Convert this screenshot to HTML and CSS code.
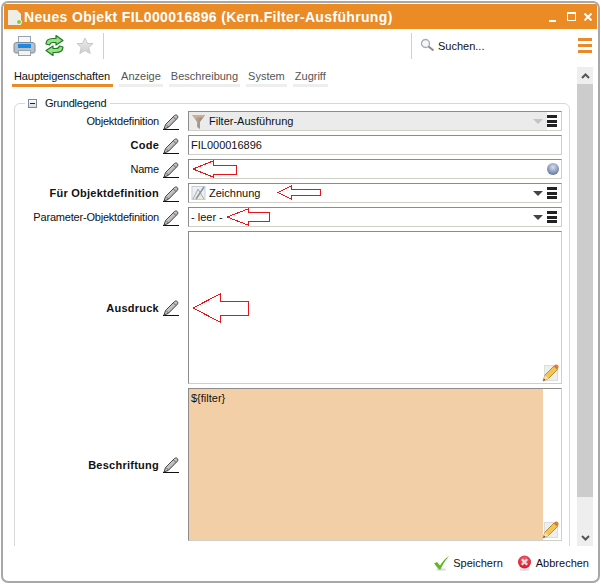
FILE: index.html
```html
<!DOCTYPE html>
<html lang="de">
<head>
    <meta charset="UTF-8">
    <title>Neues Objekt FIL000016896</title>
    <link rel="stylesheet" href="styles.css">
</head>
<body>
    <svg class="defs" width="0" height="0">
        <defs>
            <linearGradient id="pencilBody" x1="0" y1="0" x2="1" y2="1">
                <stop offset="0" stop-color="#f4f4f4"/>
                <stop offset="1" stop-color="#8a8a8a"/>
            </linearGradient>
            <linearGradient id="starFill" x1="0" y1="0" x2="0" y2="1">
                <stop offset="0" stop-color="#ececec"/>
                <stop offset="1" stop-color="#cfcfcf"/>
            </linearGradient>
            <linearGradient id="funnelFill" x1="0" y1="0" x2="1" y2="0">
                <stop offset="0" stop-color="#c9bdb0"/>
                <stop offset="1" stop-color="#85796d"/>
            </linearGradient>
            <radialGradient id="errFill" cx=".5" cy=".3" r=".7">
                <stop offset="0" stop-color="#f4606c"/>
                <stop offset="1" stop-color="#d8142a"/>
            </radialGradient>
            <symbol id="pencil" viewBox="0 0 16 16">
                <path d="M0 15.500H16" stroke="#111" stroke-width="1" fill="none"/>
                <path d="M1 15L2.500 10.500L11.500 1.500C12.500 .7 13.500 .8 14.300 1.600C15 2.400 15 3.400 14.300 4.300L5.300 13.400Z" fill="url(#pencilBody)" stroke="#333" stroke-width=".9"/>
                <path d="M3 10.500L5.500 13M10.500 3L13 5.500" stroke="#444" stroke-width=".7" fill="none"/>
            </symbol>
            <symbol id="editnote" viewBox="0 0 17 18">
                <rect x="2.500" y="1.500" width="13" height="15" fill="#eee" stroke="#ddd"/>
                <path d="M1 17L3 11L12 2L15.500 5.500L6.500 14.500Z" fill="#f3c552" stroke="#a97c20" stroke-width=".8"/>
                <path d="M11.500 2.500L13 1C14 .2 15.300 .6 16 1.400C16.800 2.300 16.800 3.400 16 4.500L15 5.500Z" fill="#e8792a"/>
                <path d="M1 17L3 11L6.500 14.500Z" fill="#f5dfb8"/>
                <path d="M1 17L2 14.500L3.500 16Z" fill="#7a4a20"/>
            </symbol>
        </defs>
    </svg>

    <div class="window">
        <header class="titlebar">
            <svg class="title-doc" width="14" height="15" viewBox="0 0 14 15">
                <path d="M0 0H9L13 4V15H0Z" fill="#eeeee6"/>
                <circle cx="11" cy="12" r="2.500" fill="#8cc63f" stroke="#f6f6f0"/>
            </svg>
            <h1>Neues Objekt FIL000016896 (Kern.Filter-Ausführung)</h1>
            <div class="win-buttons">
                <span class="win-min"></span>
                <span class="win-max"></span>
                <svg width="8" height="8" viewBox="0 0 8 8"><path d="M.5 .5L7.500 7.500M7.500 .5L.5 7.500" stroke="#fff" stroke-width="2"/></svg>
            </div>
        </header>

        <div class="toolbar">
            <div class="tool-icons">
                <svg width="23" height="22" viewBox="0 0 23 22">
                    <rect x="5.500" y="1.500" width="12" height="9" fill="#f4f6f8" stroke="#9aa4ae"/>
                    <path d="M1 10C1 8 2 7.500 4 7.500H19C21 7.500 22 8 22 10V16C22 17.500 21 18 19 18H4C2 18 1 17.500 1 16Z" fill="#b9c2cb" stroke="#7f8a95"/>
                    <rect x="5" y="9" width="13" height="4" fill="#1e88e5"/>
                    <rect x="5.500" y="15.500" width="12" height="5" fill="#f2f3f5" stroke="#9aa4ae"/>
                </svg>
                <svg width="21" height="23" viewBox="0 0 21 23">
                    <path d="M2 10C2 6 5 4.500 9 4.500H12V1.500L19 6.500L12 11V8.500H9C7 8.500 6 9.500 5.500 11Z" fill="#9be07f" stroke="#1c7a2c" stroke-width="1.200" stroke-linejoin="round"/>
                    <path d="M19 13C19 17 16 18.500 12 18.500H9V21.500L2 16.500L9 12V14.500H12C14 14.500 15 13.500 15.500 12Z" fill="#9be07f" stroke="#1c7a2c" stroke-width="1.200" stroke-linejoin="round"/>
                </svg>
                <svg class="tool-star" width="18" height="18" viewBox="0 0 18 18">
                    <path d="M9 1L11.500 6.500H17L12.800 10.500L14.200 16.500L9 13.500L3.800 16.500L5.200 10.500L1 6.500H6.500Z" fill="url(#starFill)" stroke="#c8c8c8"/>
                </svg>
            </div>
            <div class="search">
                <svg width="15" height="15" viewBox="0 0 15 15">
                    <circle cx="5.500" cy="5.500" r="4" fill="#f5f7f9" stroke="#a9adb2" stroke-width="1.300"/>
                    <path d="M8.500 8.500L13.500 12.500" stroke="#8d8d8d" stroke-width="2"/>
                </svg>
                <span>Suchen...</span>
            </div>
            <div class="page-menu"><i></i><i></i><i></i></div>
        </div>

        <nav class="tabs">
            <a class="tab active">Haupteigenschaften</a>
            <a class="tab">Anzeige</a>
            <a class="tab">Beschreibung</a>
            <a class="tab">System</a>
            <a class="tab">Zugriff</a>
        </nav>

        <div class="content">
            <div class="scroll-area">
                <fieldset class="group">
                    <legend>
                        <span class="collapse"></span>
                        <span>Grundlegend</span>
                    </legend>

                    <div class="row">
                        <label>Objektdefinition</label>
                        <svg class="pen"><use href="#pencil"/></svg>
                        <div class="field disabled">
                            <svg class="field-icon" width="15" height="15" viewBox="0 0 15 15">
                                <path d="M1 1H14L9 8V15L6 13V8Z" fill="url(#funnelFill)"/>
                                <path d="M1 1H14L12 3.500H3Z" fill="#d9a98c"/>
                            </svg>
                            <span class="value">Filter-Ausführung</span>
                            <i class="caret light"></i>
                            <span class="burger-box"><span class="burger"><i></i><i></i><i></i></span></span>
                        </div>
                    </div>

                    <div class="row">
                        <label class="strong">Code</label>
                        <svg class="pen"><use href="#pencil"/></svg>
                        <div class="field"><span class="value">FIL000016896</span></div>
                    </div>

                    <div class="row">
                        <label>Name</label>
                        <svg class="pen"><use href="#pencil"/></svg>
                        <div class="field">
                            <svg class="arrow arrow-name" width="45" height="18" viewBox="0 0 45 18"><path d="M1 9L21 1V5H44V14H21V17Z"/></svg>
                            <span class="value"></span>
                            <span class="orb"></span>
                        </div>
                    </div>

                    <div class="row">
                        <label class="strong">Für Objektdefinition</label>
                        <svg class="pen"><use href="#pencil"/></svg>
                        <div class="field">
                            <svg class="field-icon" width="15" height="16" viewBox="0 0 15 16">
                                <rect x="1" y="1.500" width="13" height="13" fill="#eef0f3" stroke="#c9cdd3"/>
                                <path d="M2 14L7 4L13 14" fill="#f3ead2" stroke="#a3a7ae"/>
                                <path d="M5 14L13 2" stroke="#7d97b8" stroke-width="1.500"/>
                            </svg>
                            <span class="value">Zeichnung</span>
                            <svg class="arrow arrow-draw" width="45" height="15" viewBox="0 0 45 15"><path d="M1 7.500L14 1V4H43V10.500H14V14Z"/></svg>
                            <i class="caret"></i>
                            <span class="burger"><i></i><i></i><i></i></span>
                        </div>
                    </div>

                    <div class="row">
                        <label>Parameter-Objektdefinition</label>
                        <svg class="pen"><use href="#pencil"/></svg>
                        <div class="field">
                            <span class="value">- leer -</span>
                            <svg class="arrow arrow-empty" width="45" height="18" viewBox="0 0 45 18"><path d="M1 9L22 1V4H43V13H22V17Z"/></svg>
                            <i class="caret"></i>
                            <span class="burger"><i></i><i></i><i></i></span>
                        </div>
                    </div>

                    <div class="row row-tall">
                        <label class="strong">Ausdruck</label>
                        <svg class="pen"><use href="#pencil"/></svg>
                        <div class="field field-area">
                            <svg class="arrow arrow-expr" width="57" height="30" viewBox="0 0 57 30"><path d="M1 15L28 1V8H56V22H28V29Z"/></svg>
                            <svg class="edit-note"><use href="#editnote"/></svg>
                        </div>
                    </div>

                    <div class="row row-tall">
                        <label class="strong">Beschriftung</label>
                        <svg class="pen"><use href="#pencil"/></svg>
                        <div class="field field-area field-caption">
                            <div class="caption-text">${filter}</div>
                            <svg class="edit-note"><use href="#editnote"/></svg>
                        </div>
                    </div>
                </fieldset>
            </div>

            <div class="scrollbar">
                <div class="scroll-btn">
                    <svg width="9" height="6" viewBox="0 0 9 6"><path d="M1 5L4.500 1.500L8 5" fill="none" stroke="#555" stroke-width="2"/></svg>
                </div>
                <div class="scroll-thumb"></div>
                <div class="scroll-btn scroll-down">
                    <svg width="9" height="6" viewBox="0 0 9 6"><path d="M1 1L4.500 4.500L8 1" fill="none" stroke="#555" stroke-width="2"/></svg>
                </div>
            </div>
        </div>

        <footer class="actions">
            <a class="action">
                <svg width="15" height="15" viewBox="0 0 15 15">
                    <ellipse cx="7" cy="13.500" rx="5" ry="1.300" fill="#ddd"/>
                    <path d="M0 7.500L3 6L6 9.500C8 6 11 2.500 15 0C11.500 4 8.500 9 6.500 13.500H5Z" fill="#66b32e"/>
                </svg>
                Speichern
            </a>
            <a class="action">
                <svg width="15" height="16" viewBox="0 0 15 16">
                    <ellipse cx="7.500" cy="14.500" rx="5" ry="1.300" fill="#ddd"/>
                    <circle cx="7.500" cy="7" r="6.500" fill="url(#errFill)"/>
                    <path d="M4.800 4.300L10.200 9.700M10.200 4.300L4.800 9.700" stroke="#f8e0e3" stroke-width="2.200"/>
                </svg>
                Abbrechen
            </a>
        </footer>
    </div>
</body>
</html>
```

FILE: styles.css
```css
* {
    box-sizing: border-box;
}

body {
    margin: 0;
    background: #fff;
    font-family: "Liberation Sans", Arial, sans-serif;
    font-size: 11px;
    color: #111;
}

.defs {
    position: absolute;
}

.window {
    width: 599px;
    height: 582px;
    margin: 1px;
    padding: 1px;
    border: 2px solid #a8a8a8;
    border-radius: 7px;
    display: flex;
    flex-direction: column;
    overflow: hidden;
}

/* title */
.titlebar {
    height: 25px;
    flex: none;
    background: #eb8b26;
    display: flex;
    align-items: center;
    padding: 0 5px 0 4px;
    color: #fff;
}

.title-doc {
    margin-right: 2px;
    margin-top: 1px;
}

.titlebar h1 {
    margin: 0;
    font-size: 14px;
    font-weight: bold;
    letter-spacing: .34px;
    white-space: nowrap;
    flex: 1;
}

.win-buttons {
    display: flex;
    align-items: center;
}

.win-min {
    width: 7px;
    height: 2px;
    background: #fff;
    margin-top: 8px;
    margin-right: 11px;
}

.win-max {
    width: 9px;
    height: 9px;
    border: 1px solid #fff;
    border-top-width: 2px;
    margin-right: 8px;
}

/* toolbar */
.toolbar {
    height: 33px;
    flex: none;
    display: flex;
    align-items: center;
    padding: 0 5px 0 9px;
}

.tool-icons {
    display: flex;
    align-items: center;
    gap: 8px;
    width: 91px;
    height: 26px;
    border-right: 1px solid #d0d0d0;
}

.tool-star {
    margin-left: 3px;
}

.search {
    margin-left: 307px;
    flex: 1;
    height: 26px;
    padding-left: 8px;
    border-left: 1px solid #d0d0d0;
    display: flex;
    align-items: center;
    gap: 3px;
}

.page-menu {
    width: 14px;
    display: flex;
    flex-direction: column;
    gap: 3px;
}

.page-menu i {
    height: 3px;
    background: #e98a2a;
}

/* tabs */
.tabs {
    height: 18px;
    flex: none;
    display: flex;
    gap: 6px;
    margin-top: 8px;
    padding-left: 8px;
}

.tab {
    padding: 0 2px;
    line-height: 13px;
    border-bottom: 3px solid #eee;
    height: 17px;
    color: #555;
}

.tab.active {
    color: #111;
    padding-right: 3px;
    letter-spacing: -.1px;
    border-bottom-color: #eb8b26;
}

/* body + scrollbar */
.content {
    height: 479px;
    flex: none;
    margin-top: -21px;
    display: flex;
    padding-right: 4px;
}

.scroll-area {
    flex: 1;
    overflow: hidden;
    padding: 30px 7px 0 10px;
}

.group {
    margin: 0;
    padding: 0 7px 40px 0;
    border: 1px solid #d8d8d8;
    border-radius: 6px;
    min-width: 0;
}

.group legend {
    margin-left: 10px;
    margin-bottom: 1px;
    padding: 0 4px 0 3px;
    display: flex;
    align-items: center;
    gap: 8px;
    line-height: 13px;
    letter-spacing: -.2px;
}

.collapse {
    width: 9px;
    height: 9px;
    border: 1px solid #7e8a9a;
    background: linear-gradient(#fff, #d5dbe3);
    position: relative;
}

.collapse::after {
    content: "";
    position: absolute;
    left: 1px;
    right: 1px;
    top: 3px;
    height: 1px;
    background: #222;
}

.scrollbar {
    width: 16px;
    flex: none;
    display: flex;
    flex-direction: column;
    background: #eee;
}

.scroll-btn {
    height: 17px;
    flex: none;
    display: flex;
    align-items: center;
    justify-content: center;
}

.scroll-thumb {
    height: 413px;
    background: #ccc;
}

.scroll-down {
    margin-top: auto;
}

/* form rows */
.row {
    display: grid;
    grid-template-columns: 148px 16px 1fr;
    align-items: center;
    height: 20px;
    margin-bottom: 4px;
}

.row-tall {
    height: 153px;
}

.row label {
    text-align: right;
    white-space: nowrap;
    letter-spacing: -.2px;
    margin-right: 4px;
}

.row label.strong {
    font-weight: bold;
    letter-spacing: .25px;
}

.pen {
    width: 16px;
    height: 16px;
    margin-top: 1px;
}

.field {
    position: relative;
    height: 100%;
    margin-left: 9px;
    border: 1px solid #d0d0c8;
    border-top: 1px solid #8c8c8c;
    border-left: 1px solid #8c8c8c;
    background: #fff;
    display: flex;
    align-items: center;
    padding: 0 2px 0 2px;
}

.field.disabled {
    background: #ebebeb;
}

.field-icon {
    margin-right: 3px;
    flex: none;
}

.value {
    flex: 1;
    white-space: nowrap;
}

.caret {
    width: 0;
    height: 0;
    margin-right: 4px;
    border-left: 5px solid transparent;
    border-right: 5px solid transparent;
    border-top: 5px solid #444;
}

.caret.light {
    border-top-color: #c4c4c4;
}

.burger-box {
    background: #fff;
    height: 100%;
    display: flex;
    align-items: center;
    margin-right: -2px;
    padding: 0 2px 0 0;
}

.burger {
    width: 10px;
    margin-right: 2px;
    display: flex;
    flex-direction: column;
    gap: 1.500px;
}

.burger i {
    height: 3px;
    background: #222;
}

.orb {
    width: 12px;
    height: 12px;
    border-radius: 50%;
    background: radial-gradient(circle at 50% 35%, #d8dfea, #7d90b3 60%, #4a5a7c);
}

.field-area {
    align-items: flex-start;
}

.field-caption {
    padding: 0;
}

.caption-text {
    width: 354px;
    height: 100%;
    background: #f2cfa6;
    padding: 3px 2px;
}

.edit-note {
    position: absolute;
    right: 2px;
    bottom: 1px;
    width: 17px;
    height: 18px;
}

/* red markers drawn over the form */
.arrow {
    position: absolute;
    overflow: visible;
}

.arrow path {
    fill: #fff;
    stroke: #e8141c;
    stroke-width: 1;
    shape-rendering: crispEdges;
}

.arrow-name {
    left: 3px;
    top: 0;
}

.arrow-draw {
    left: 88px;
    top: 1px;
}

.arrow-empty {
    left: 37px;
    top: 0;
}

.arrow-expr {
    left: 3px;
    top: 61px;
}

/* footer */
.actions {
    flex: 1;
    display: flex;
    justify-content: flex-end;
    align-items: center;
    gap: 14px;
    padding-right: 8px;
}

.action {
    display: flex;
    align-items: center;
    gap: 4px;
}
```
